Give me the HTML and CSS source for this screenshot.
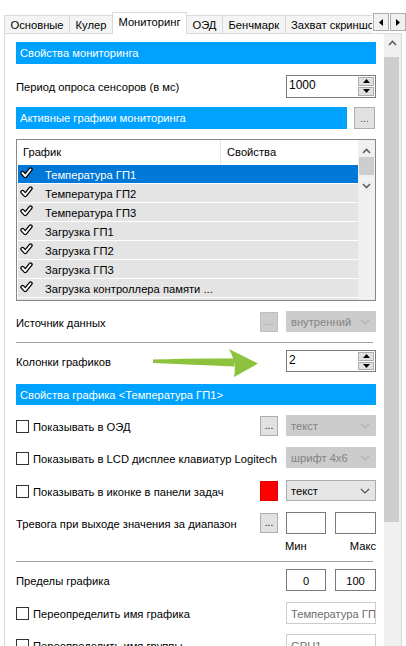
FILE: index.html
```html
<!DOCTYPE html>
<html lang="ru">
<head>
  <meta charset="UTF-8">
  <title>Свойства - Мониторинг</title>
  <link rel="stylesheet" href="styles.css">
</head>
<body>
  <div class="window">
    <div class="tabbar">
      <div class="tabs">
        <div class="tab">Основные</div>
        <div class="tab">Кулер</div>
        <div class="tab tab-active">Мониторинг</div>
        <div class="tab">ОЭД</div>
        <div class="tab">Бенчмарк</div>
        <div class="tab">Захват скриншотов</div>
      </div>
      <div class="tab-arrows">
        <span class="tab-arrow"><svg width="6" height="7" viewBox="0 0 6 7"><path d="M5 0 L1 3.5 L5 7 Z" fill="#000"/></svg></span>
        <span class="tab-arrow"><svg width="6" height="7" viewBox="0 0 6 7"><path d="M1 0 L5 3.5 L1 7 Z" fill="#000"/></svg></span>
      </div>
    </div>

    <div class="panel">
      <div class="content">
        <div class="bar">Свойства мониторинга</div>

        <div class="row row-tall mt1">
          <span class="label">Период опроса сенсоров (в мс)</span>
          <div class="spin">
            <span class="spin-value">1000</span>
            <div class="spin-btns">
              <span class="spin-btn"><svg width="7" height="4" viewBox="0 0 7 4"><path d="M0 4 L3.5 0 L7 4 Z"/></svg></span>
              <span class="spin-btn"><svg width="7" height="4" viewBox="0 0 7 4"><path d="M0 0 L3.5 4 L7 0 Z"/></svg></span>
            </div>
          </div>
        </div>

        <div class="row row-bar">
          <div class="bar bar-grow">Активные графики мониторинга</div>
          <span class="btn btn-wide">...</span>
        </div>

        <div class="list">
          <div class="list-main">
            <div class="list-head">
              <span class="col-name">График</span>
              <span class="col-props">Свойства</span>
            </div>
            <div class="list-item selected"><svg class="check" width="13" height="12" viewBox="0 0 13 12"><path d="M2.5 6 L5.3 9 L10.5 2.5" fill="none" stroke="#000" stroke-width="4.4" stroke-linecap="round" stroke-linejoin="round"/><path d="M2.5 6 L5.3 9 L10.5 2.5" fill="none" stroke="#fff" stroke-width="1.9" stroke-linecap="round" stroke-linejoin="round"/></svg><span>Температура ГП1</span></div>
            <div class="list-item"><svg class="check" width="13" height="12" viewBox="0 0 13 12"><path d="M2.5 6 L5.3 9 L10.5 2.5" fill="none" stroke="#000" stroke-width="4.4" stroke-linecap="round" stroke-linejoin="round"/><path d="M2.5 6 L5.3 9 L10.5 2.5" fill="none" stroke="#fff" stroke-width="1.9" stroke-linecap="round" stroke-linejoin="round"/></svg><span>Температура ГП2</span></div>
            <div class="list-item"><svg class="check" width="13" height="12" viewBox="0 0 13 12"><path d="M2.5 6 L5.3 9 L10.5 2.5" fill="none" stroke="#000" stroke-width="4.4" stroke-linecap="round" stroke-linejoin="round"/><path d="M2.5 6 L5.3 9 L10.5 2.5" fill="none" stroke="#fff" stroke-width="1.9" stroke-linecap="round" stroke-linejoin="round"/></svg><span>Температура ГП3</span></div>
            <div class="list-item"><svg class="check" width="13" height="12" viewBox="0 0 13 12"><path d="M2.5 6 L5.3 9 L10.5 2.5" fill="none" stroke="#000" stroke-width="4.4" stroke-linecap="round" stroke-linejoin="round"/><path d="M2.5 6 L5.3 9 L10.5 2.5" fill="none" stroke="#fff" stroke-width="1.9" stroke-linecap="round" stroke-linejoin="round"/></svg><span>Загрузка ГП1</span></div>
            <div class="list-item"><svg class="check" width="13" height="12" viewBox="0 0 13 12"><path d="M2.5 6 L5.3 9 L10.5 2.5" fill="none" stroke="#000" stroke-width="4.4" stroke-linecap="round" stroke-linejoin="round"/><path d="M2.5 6 L5.3 9 L10.5 2.5" fill="none" stroke="#fff" stroke-width="1.9" stroke-linecap="round" stroke-linejoin="round"/></svg><span>Загрузка ГП2</span></div>
            <div class="list-item"><svg class="check" width="13" height="12" viewBox="0 0 13 12"><path d="M2.5 6 L5.3 9 L10.5 2.5" fill="none" stroke="#000" stroke-width="4.4" stroke-linecap="round" stroke-linejoin="round"/><path d="M2.5 6 L5.3 9 L10.5 2.5" fill="none" stroke="#fff" stroke-width="1.9" stroke-linecap="round" stroke-linejoin="round"/></svg><span>Загрузка ГП3</span></div>
            <div class="list-item"><svg class="check" width="13" height="12" viewBox="0 0 13 12"><path d="M2.5 6 L5.3 9 L10.5 2.5" fill="none" stroke="#000" stroke-width="4.4" stroke-linecap="round" stroke-linejoin="round"/><path d="M2.5 6 L5.3 9 L10.5 2.5" fill="none" stroke="#fff" stroke-width="1.9" stroke-linecap="round" stroke-linejoin="round"/></svg><span>Загрузка контроллера памяти ...</span></div>
            <div class="list-item"><svg class="check" width="13" height="12" viewBox="0 0 13 12"><path d="M2.5 6 L5.3 9 L10.5 2.5" fill="none" stroke="#000" stroke-width="4.4" stroke-linecap="round" stroke-linejoin="round"/><path d="M2.5 6 L5.3 9 L10.5 2.5" fill="none" stroke="#fff" stroke-width="1.9" stroke-linecap="round" stroke-linejoin="round"/></svg><span>Загрузка видеоядра</span></div>
          </div>
          <div class="list-scroll">
            <svg class="chev" width="9" height="6" viewBox="0 0 9 6"><path d="M1 5 L4.5 1.5 L8 5" fill="none" stroke="#606060" stroke-width="1.6"/></svg>
            <div class="list-thumb"></div>
            <svg class="chev chev-bottom" width="9" height="6" viewBox="0 0 9 6"><path d="M1 1 L4.5 4.5 L8 1" fill="none" stroke="#606060" stroke-width="1.6"/></svg>
          </div>
        </div>

        <div class="row">
          <span class="label">Источник данных</span>
          <span class="btn btn-disabled">...</span>
          <div class="combo combo-disabled">
            <span>внутренний</span>
            <svg width="10" height="6" viewBox="0 0 10 6"><path d="M1 1 L5 5 L9 1" fill="none" stroke="#b0b0b0" stroke-width="1.2"/></svg>
          </div>
        </div>

        <div class="separator"></div>

        <div class="row row-arrow mt-3">
          <span class="label">Колонки графиков</span>
          <svg class="pointer" width="110" height="32" viewBox="0 0 110 32">
            <path d="M3 12.5 Q40 11 84 11.5 L84 19.5 Q40 17.5 3 16 Z" fill="#8cc23e"/>
            <path d="M79 2 L108 16.5 L84 30 Q87 16 79 2 Z" fill="#8cc23e"/>
          </svg>
          <div class="spin spin-short">
            <span class="spin-value">2</span>
            <div class="spin-btns">
              <span class="spin-btn"><svg width="7" height="4" viewBox="0 0 7 4"><path d="M0 4 L3.5 0 L7 4 Z"/></svg></span>
              <span class="spin-btn"><svg width="7" height="4" viewBox="0 0 7 4"><path d="M0 0 L3.5 4 L7 0 Z"/></svg></span>
            </div>
          </div>
        </div>

        <div class="bar bar-short mt2">Свойства графика &lt;Температура ГП1&gt;</div>

        <div class="row">
          <span class="checkbox"></span>
          <span class="label">Показывать в ОЭД</span>
          <span class="btn">...</span>
          <div class="combo combo-disabled">
            <span>текст</span>
            <svg width="10" height="6" viewBox="0 0 10 6"><path d="M1 1 L5 5 L9 1" fill="none" stroke="#b0b0b0" stroke-width="1.2"/></svg>
          </div>
        </div>

        <div class="row mt1">
          <span class="checkbox"></span>
          <span class="label">Показывать в LCD дисплее клавиатур Logitech</span>
          <div class="combo combo-disabled">
            <span>шрифт 4x6</span>
            <svg width="10" height="6" viewBox="0 0 10 6"><path d="M1 1 L5 5 L9 1" fill="none" stroke="#b0b0b0" stroke-width="1.2"/></svg>
          </div>
        </div>

        <div class="row mt2">
          <span class="checkbox"></span>
          <span class="label">Показывать в иконке в панели задач</span>
          <span class="swatch"></span>
          <div class="combo">
            <span>текст</span>
            <svg width="10" height="6" viewBox="0 0 10 6"><path d="M1 1 L5 5 L9 1" fill="none" stroke="#505050" stroke-width="1.2"/></svg>
          </div>
        </div>

        <div class="row row-tall mt1">
          <span class="label">Тревога при выходе значения за диапазон</span>
          <span class="btn">...</span>
          <div class="pair">
            <span class="field"></span>
            <span class="field field-wide"></span>
          </div>
        </div>

        <div class="minmax">
          <span class="min">Мин</span>
          <span class="max">Макс</span>
        </div>

        <div class="separator mt-3"></div>

        <div class="row row-tall mt-3">
          <span class="label">Пределы графика</span>
          <div class="pair">
            <span class="field">0</span>
            <span class="field field-wide">100</span>
          </div>
        </div>

        <div class="row row-tall mt1">
          <span class="checkbox"></span>
          <span class="label">Переопределить имя графика</span>
          <span class="field field-text field-disabled">Температура ГП1</span>
        </div>

        <div class="row row-tall">
          <span class="checkbox"></span>
          <span class="label">Переопределить имя группы</span>
          <span class="field field-text field-disabled">GPU1</span>
        </div>
      </div>

      <div class="page-scroll">
        <svg class="chev" width="9" height="6" viewBox="0 0 9 6"><path d="M1 5 L4.5 1.5 L8 5" fill="none" stroke="#606060" stroke-width="1.6"/></svg>
        <div class="page-thumb"></div>
      </div>
    </div>
  </div>
</body>
</html>
```

FILE: styles.css
```css
html, body {
  margin: 0;
  padding: 0;
  background: #fff;
}

body {
  font-family: 'Liberation Sans', Arial, sans-serif;
  font-size: 11.2px;
  color: #000;
}

.window {
  width: 406px;
  height: 646px;
  overflow: hidden;
}

/* tab strip */

.tabbar {
  display: flex;
  height: 33px;
}

.tabs {
  flex: 1;
  min-width: 0;
  display: flex;
  align-items: flex-end;
  padding-left: 4px;
  overflow-x: clip;
}

.tab {
  height: 18px;
  line-height: 18px;
  padding: 0 5.5px;
  border: 1px solid #d9d9d9;
  border-bottom: none;
  margin-right: -1px;
  background: #f4f4f4;
  white-space: nowrap;
  box-sizing: border-box;
  flex-shrink: 0;
}

.tab-active {
  position: relative;
  z-index: 1;
  height: 22px;
  line-height: 19px;
  margin-bottom: -1px;
  padding: 0 5.5px;
  background: #fff;
}

.tab-arrows {
  display: flex;
  flex-shrink: 0;
  margin-top: 13px;
  height: 18px;
}

.tab-arrow {
  width: 16px;
  height: 18px;
  box-sizing: border-box;
  border: 1px solid #adadad;
  background: #f0f0f0;
  display: flex;
  align-items: center;
  justify-content: center;
  margin-left: 1px;
}

/* panel */

.panel {
  display: flex;
  width: 398px;
  height: 613px;
  margin-left: 4px;
  box-sizing: border-box;
  border: 1px solid #d9d9d9;
  border-bottom: none;
}

.content {
  width: 360px;
  margin-left: 11px;
  padding-top: 8px;
  display: flex;
  flex-direction: column;
  gap: 10px;
  flex-shrink: 0;
}

.page-scroll {
  width: 17px;
  margin-left: 8px;
  background: #f0f0f0;
  display: flex;
  flex-direction: column;
  align-items: flex-start;
}

.page-scroll .chev {
  margin: 6px 0 0 4px;
}

.page-thumb {
  width: 15px;
  height: 465px;
  margin-top: 11px;
  background: #cdcdcd;
}

/* blue section headers */

.bar {
  height: 22px;
  flex-shrink: 0;
  padding-left: 4px;
  display: flex;
  align-items: center;
  background: #00a2ff;
  color: #fff;
}

.bar-short {
  height: 21px;
}

.bar-grow {
  flex: 1;
  margin-right: 7px;
}

/* rows */

.row {
  display: flex;
  align-items: center;
  height: 21px;
  flex-shrink: 0;
}

.row-tall {
  height: 22px;
}

.row-bar {
  height: 22px;
}

.row-arrow {
  position: relative;
  height: 22px;
}

.label {
  flex: 1;
  min-width: 0;
  white-space: nowrap;
  padding-top: 2px;
}

.mt1 { margin-top: 1px; }
.mt2 { margin-top: 2px; }
.mt-3 { margin-top: -3px; }

.separator {
  height: 1px;
  flex-shrink: 0;
  width: 357px;
  background: #a0a0a0;
}

/* controls */

.btn {
  width: 18px;
  height: 20px;
  margin-right: 8px;
  flex-shrink: 0;
  box-sizing: border-box;
  border: 1px solid #adadad;
  background: #e1e1e1;
  display: flex;
  align-items: flex-end;
  justify-content: center;
  padding-bottom: 4px;
  font-size: 10px;
  line-height: 1;
}

.btn-wide {
  width: 21px;
  height: 22px;
  margin-right: 1px;
  color: #444;
}

.btn-disabled {
  background: #cccccc;
  border-color: #bfbfbf;
  color: #9a9a9a;
}

.combo {
  width: 90px;
  height: 21px;
  flex-shrink: 0;
  box-sizing: border-box;
  border: 1px solid #acacac;
  background: #e5e5e5;
  display: flex;
  align-items: center;
  justify-content: space-between;
  padding: 1px 5px 0 4px;
  white-space: nowrap;
}

.combo-disabled {
  background: #cccccc;
  border-color: #cccccc;
  color: #838383;
}

.swatch {
  width: 18px;
  height: 20px;
  margin-right: 8px;
  flex-shrink: 0;
  box-sizing: border-box;
  background: #ff0000;
  border: 1px solid #e00000;
}

.spin {
  width: 90px;
  height: 23px;
  flex-shrink: 0;
  box-sizing: border-box;
  border: 1px solid #7a7a7a;
  background: #fff;
  display: flex;
}

.spin-short {
  height: 22px;
}

.spin-value {
  flex: 1;
  padding: 2px 0 0 2px;
  line-height: 14px;
  font-size: 12px;
}

.spin-btns {
  width: 16px;
  padding: 1px 1px 1px 0;
  display: flex;
  flex-direction: column;
  gap: 1px;
}

.spin-btn {
  flex: 1;
  border: 1px solid #adadad;
  background: #e1e1e1;
  display: flex;
  align-items: center;
  justify-content: center;
}

.checkbox {
  width: 13px;
  height: 13px;
  flex-shrink: 0;
  box-sizing: border-box;
  border: 1px solid #333;
  background: #fff;
  margin-right: 4px;
  margin-top: 1px;
}

.pair {
  display: flex;
  gap: 9px;
  height: 22px;
}

.field {
  width: 40px;
  height: 22px;
  flex-shrink: 0;
  box-sizing: border-box;
  border: 1px solid #7a7a7a;
  background: #fff;
  display: flex;
  align-items: center;
  justify-content: center;
  padding-top: 1px;
}

.field-wide {
  width: 41px;
}

.field-text {
  width: 90px;
  justify-content: flex-start;
  padding-left: 4px;
  overflow: hidden;
  white-space: nowrap;
}

.field-disabled {
  border-color: #cccccc;
  color: #6d6d6d;
}

.minmax {
  display: flex;
  justify-content: flex-end;
  gap: 9px;
  height: 14px;
  margin-top: -4px;
  flex-shrink: 0;
}

.minmax span {
  width: 41px;
}

.min {
  padding-left: 1px;
}

.max {
  text-align: right;
}

/* green annotation arrow lies over the row */

.pointer {
  position: absolute;
  left: 134px;
  top: -3px;
}

/* list */

.list {
  height: 162px;
  flex-shrink: 0;
  box-sizing: border-box;
  border: 1px solid #828790;
  background: #fff;
  display: flex;
}

.list-main {
  flex: 1;
  padding-left: 1px;
  overflow: hidden;
}

.list-head {
  height: 25px;
  display: flex;
}

.col-name {
  width: 203px;
  box-sizing: border-box;
  padding: 6px 0 0 5px;
  border-right: 1px solid #e5e5e5;
}

.col-props {
  padding: 6px 0 0 6px;
}

.list-item {
  height: 18px;
  border-bottom: 1px solid #fff;
  background: #e4e4e4;
  display: flex;
  align-items: center;
  padding-left: 2px;
  white-space: nowrap;
}

.list-item span {
  margin-left: 12px;
  padding-top: 1px;
}

.list-item .check {
  margin-top: -3px;
}

.list-item.selected {
  background: #0078d7;
  color: #fff;
}

.list-scroll {
  width: 17px;
  background: #f0f0f0;
  display: flex;
  flex-direction: column;
  align-items: center;
}

.list-scroll .chev {
  margin-top: 8px;
}

.list-thumb {
  width: 15px;
  height: 18px;
  margin-top: 3px;
  background: #cdcdcd;
}

.chev-bottom {
  margin-top: auto;
  margin-bottom: 5px;
}
```
